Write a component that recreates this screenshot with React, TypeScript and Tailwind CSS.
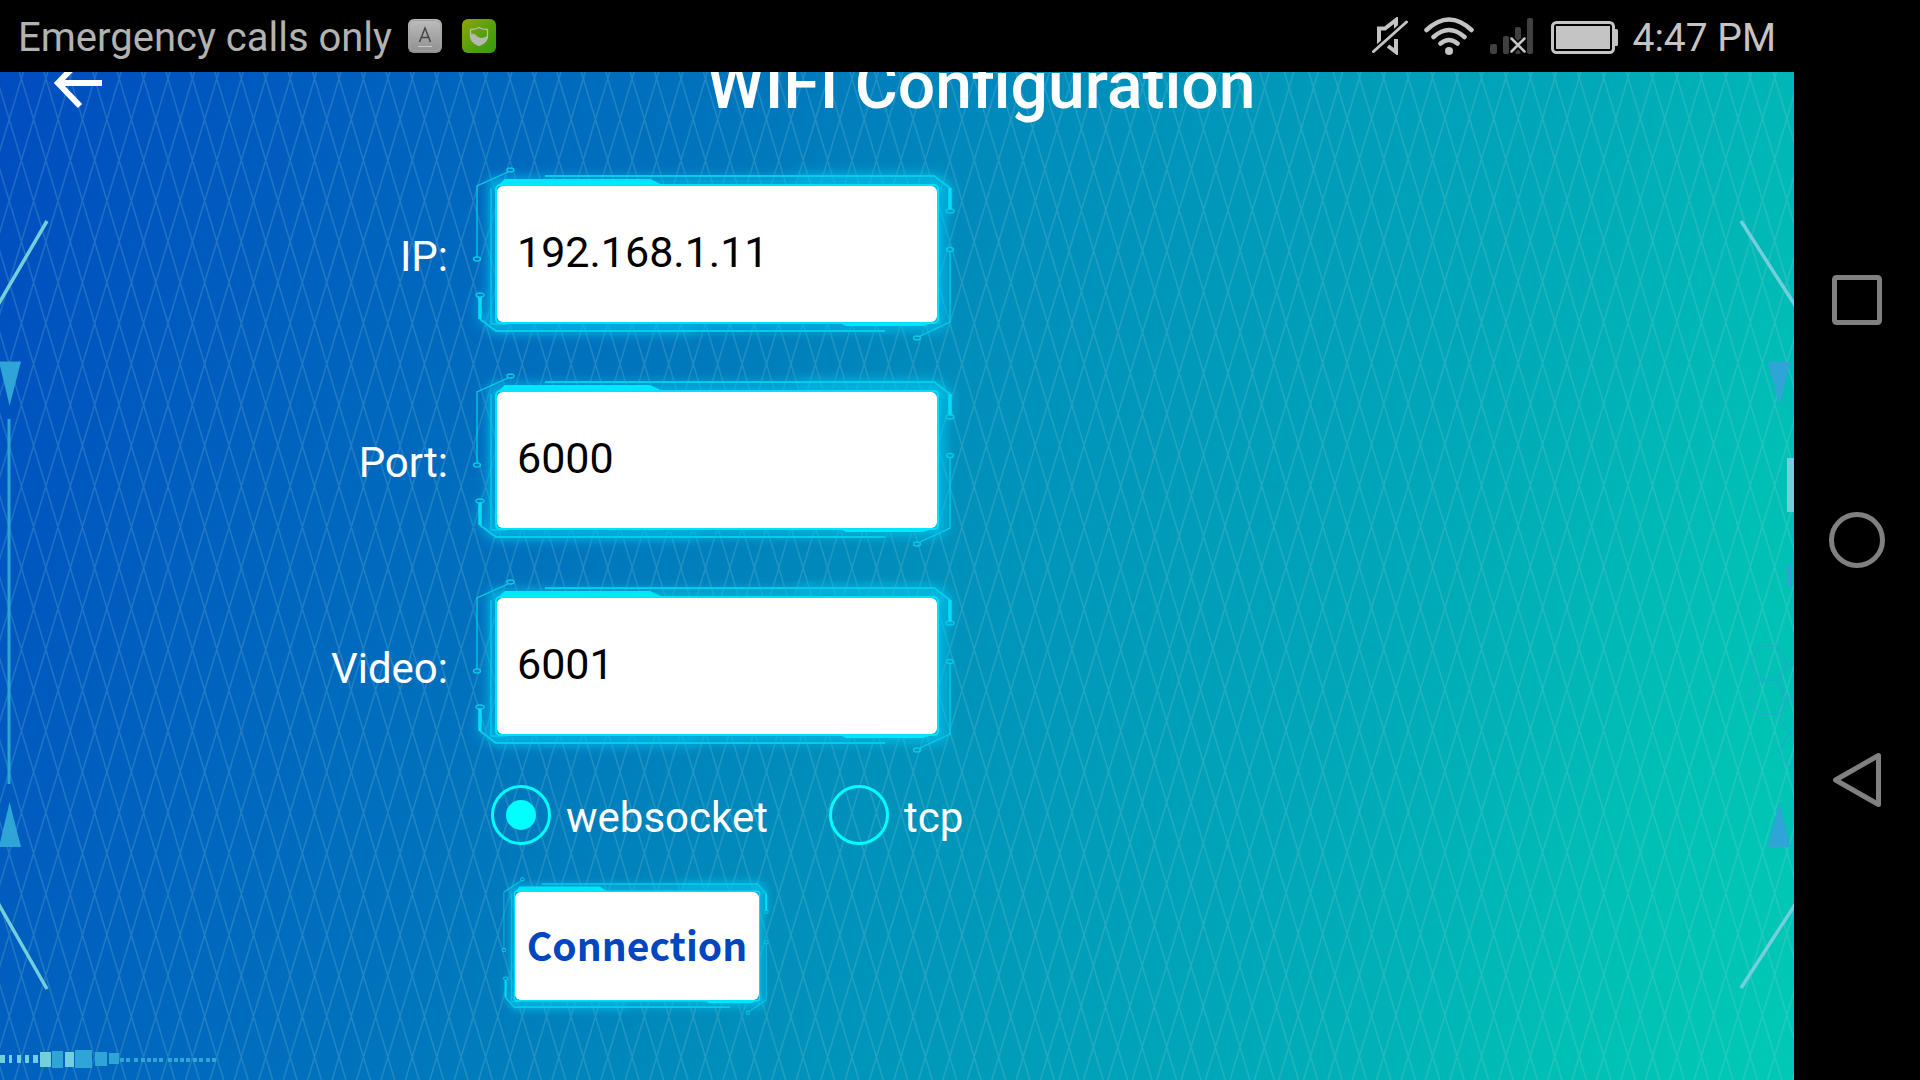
import React, { useState } from "react";

const LATTICE_STEP = 24.43;
const LATTICE_RUN = 302;

function latticePath() {
  const parts: string[] = [];
  for (let k = -14; k < 90; k++) {
    const down = -5 + k * LATTICE_STEP;
    const downX = down > 1004 ? down - 5.4 : down;
    parts.push(`M${downX.toFixed(1)} 72L${(downX + LATTICE_RUN).toFixed(1)} 1080`);
    const up = 23.4 + k * LATTICE_STEP;
    const upX = up > 1355 ? up - 6 : up;
    parts.push(`M${upX.toFixed(1)} 72L${(upX - LATTICE_RUN).toFixed(1)} 1080`);
  }
  return parts.join("");
}

const LIGHT_BLOCKS = [
  [0, 1055, 5, 8],
  [9, 1055, 3, 8],
  [17, 1055, 4, 8],
  [25, 1055, 4, 8],
  [33, 1055, 5, 8],
  [40, 1052, 11, 15],
  [65, 1052, 9, 15],
];
const DARK_BLOCKS = [
  [52, 1051, 11, 17],
  [75, 1050, 17, 18],
  [95, 1052, 12, 14],
  [109, 1053, 10, 11],
];
const DOTS = [120, 126, 134, 141, 147, 153, 159, 168, 174, 180, 186, 193, 199, 206, 212];

function Backdrop() {
  return (
    <svg
      className="absolute inset-0 h-full w-full"
      viewBox="0 72 1794 1008"
      preserveAspectRatio="none"
      aria-hidden="true"
    >
      <defs>
        <linearGradient id="sea" gradientUnits="userSpaceOnUse" x1="0" y1="72" x2="1880" y2="756">
          <stop offset="0" stopColor="#004cc0" />
          <stop offset="0.33" stopColor="#0072bd" />
          <stop offset="0.5" stopColor="#008dbb" />
          <stop offset="0.75" stopColor="#00a8b8" />
          <stop offset="0.9" stopColor="#00bfb5" />
          <stop offset="1" stopColor="#00c8b4" />
        </linearGradient>
      </defs>
      <rect x="0" y="72" width="1794" height="1008" fill="url(#sea)" />
      <path d={latticePath()} stroke="#a0d8e0" strokeOpacity="0.2" strokeWidth="1.6" fill="none" />

      <g stroke="#73cfdb" strokeWidth="3.5">
        <path d="M47 221L-2 305M-2 903L47 989" />
        <path d="M1741 221L1798 310M1741 988L1798 900" />
      </g>
      <g fill="#2fa4d6">
        <path d="M-1 361.500H21L9.600 406Z" />
        <path d="M-1 847H21L9.600 802Z" />
        <rect x="7.500" y="419" width="3" height="365" />
        <path d="M1767.500 361.500H1790.500L1779.600 405Z" />
        <path d="M1767.500 847H1790.500L1779.600 802Z" />
        <rect x="1788" y="564" width="3.500" height="23" />
        {DARK_BLOCKS.map(([x, y, w, h]) => (
          <rect key={x} x={x} y={y} width={w} height={h} />
        ))}
        {DOTS.map((x) => (
          <rect key={x} x={x} y="1058" width="4" height="4" />
        ))}
      </g>
      <g fill="#73cfdb">
        <rect x="1787" y="458" width="7" height="54" />
        {LIGHT_BLOCKS.map(([x, y, w, h]) => (
          <rect key={x} x={x} y={y} width={w} height={h} />
        ))}
      </g>
      <g transform="translate(1700 500) scale(0.3333)" fill="none" stroke="#2f9fd6" strokeOpacity="0.8" strokeWidth="3">
        <path d="M150 487L177 438H232L261 487L232 537H177Z" />
        <path d="M145 593L173 544H229L256 593L229 642H173Z" />
        <path d="M300 494H265L235 543L265 592H300" />
        <path d="M300 600H265L236 649L265 697H300" />
        <path d="M300 703H266L237 753L265 802H300" />
      </g>
    </svg>
  );
}

function CircuitFrame() {
  return (
    <svg
      className="pointer-events-none absolute inset-0 h-full w-full overflow-visible"
      viewBox="0 0 440 136"
      preserveAspectRatio="none"
      fill="none"
      aria-hidden="true"
    >
      <defs>
        <filter id="halo" x="-20%" y="-40%" width="140%" height="180%">
          <feGaussianBlur stdDeviation="6" />
        </filter>
      </defs>
      <g filter="url(#halo)" stroke="#00c8f0">
        <rect x="-3" y="-3" width="446" height="142" strokeWidth="9" strokeOpacity="0.9" />
        <path d="M-17 109V133L-1 145H200" strokeWidth="5" strokeOpacity="0.6" />
        <path d="M300 -10H437L453 2V25" strokeWidth="5" strokeOpacity="0.6" />
      </g>
      <g stroke="#00cdea" strokeWidth="1.300">
        <path d="M11 -14L-20 0V71" />
        <ellipse cx="13.500" cy="-16" rx="3.500" ry="2" />
        <ellipse cx="-20" cy="73" rx="3.500" ry="2" />
        <path d="M453 65V136L423 150" />
        <ellipse cx="453" cy="63.500" rx="3.500" ry="2" />
        <ellipse cx="420" cy="152" rx="3.500" ry="2" />
        <path d="M-17 133L-1 145H388" strokeWidth="2" />
        <path d="M48 -10H437L453 2" strokeWidth="2" />
        <ellipse cx="-17" cy="109" rx="4" ry="2" />
        <ellipse cx="453" cy="25" rx="4" ry="2" />
        <path d="M-6 2V138H10" />
      </g>
      <g stroke="#00e0f6">
        <path d="M-17 111V133M453 2V23" strokeWidth="3.500" />
        <rect x="-1" y="-1" width="442" height="138" rx="4" strokeWidth="2" />
      </g>
      <path d="M0 0L8 -7H153L166 -1ZM343 137L349 140H426L438 136Z" fill="#00e6fa" />
    </svg>
  );
}

function Field({
  id,
  label,
  value,
  onChange,
}: {
  id: string;
  label: string;
  value: string;
  onChange: (value: string) => void;
}) {
  return (
    <div className="flex items-center">
      <label htmlFor={id} className="w-[448px] pt-1.5 text-right text-[42px] leading-[48px] text-white">
        {label}
      </label>
      <div className="relative ml-[49px] h-[136px] w-[440px]">
        <CircuitFrame />
        <input
          id={id}
          type="text"
          value={value}
          onChange={(e) => onChange(e.target.value)}
          className="relative h-full w-full rounded-md bg-white px-5 pb-1 text-[43px] leading-[48px] text-black outline-none"
        />
      </div>
    </div>
  );
}

function Choice({ value, checked, onPick }: { value: string; checked: boolean; onPick: () => void }) {
  return (
    <label className="flex items-center text-[42px] leading-[48px] text-white">
      <span className="relative flex size-[60px] items-center justify-center">
        <input
          type="radio"
          name="protocol"
          value={value}
          checked={checked}
          onChange={onPick}
          className="peer absolute inset-0 size-[60px] appearance-none rounded-full border-[3px] border-[#00ffff]"
        />
        <span className="size-[30px] rounded-full bg-[#00ffff] opacity-0 peer-checked:opacity-100" />
      </span>
      <span className="ml-[15px] pt-1.5">{value}</span>
    </label>
  );
}

function StatusBar() {
  return (
    <div className="relative z-10 flex h-[72px] items-center justify-between bg-black pr-[18px] pl-[18px] text-[39px] leading-[44px] text-[#b2b2b2]">
      <div className="flex items-center">
        <span className="pt-1 text-[40px]">Emergency calls only</span>
        <svg className="ml-4 size-[34px]" viewBox="0 0 34 34" aria-hidden="true">
          <defs>
            <linearGradient id="key" x1="0" y1="0" x2="0" y2="1">
              <stop offset="0" stopColor="#bdbdbd" />
              <stop offset="1" stopColor="#8f8f8f" />
            </linearGradient>
          </defs>
          <rect width="34" height="34" rx="6" fill="url(#key)" />
          <rect x="1.500" y="1.500" width="31" height="30" rx="5" fill="none" stroke="#a2a2a2" />
          <path d="M11.500 23L17 9L22.500 23M13.500 18.500H20.500" fill="none" stroke="#444" strokeWidth="1.500" />
          <path d="M10 27.500H24" stroke="#c8c8c8" />
        </svg>
        <svg className="ml-5 size-[34px]" viewBox="0 0 34 34" aria-hidden="true">
          <defs>
            <linearGradient id="leaf" x1="0" y1="0" x2="1" y2="1">
              <stop offset="0" stopColor="#8fa50c" />
              <stop offset="0.6" stopColor="#4f9f0c" />
              <stop offset="1" stopColor="#389a12" />
            </linearGradient>
          </defs>
          <rect width="34" height="34" rx="6" fill="url(#leaf)" />
          <path
            d="M8.500 10.500Q14 10.500 17 8.500Q20 10.500 25.500 10.500V17Q25.500 23 17 26.500Q8.500 23 8.500 17Z"
            fill="none"
            stroke="#b9bfa9"
            strokeWidth="1.300"
          />
          <path d="M8.500 15C12 14 13.500 15.500 15.500 17.500S21 19.500 25.500 17C25.500 22.500 22 25 17 27C12 25 8.500 22 8.500 15Z" fill="#b5b8b0" />
        </svg>
      </div>
      <div className="flex items-center text-[#c4c4c4]">
        <svg className="h-[38px] w-9" viewBox="0 0 36 38" fill="none" stroke="currentColor" aria-hidden="true">
          <path d="M7 28V11.500H13L24 3V14" strokeWidth="4" />
          <path d="M16 29L24 35V22" strokeWidth="4" />
          <path d="M2 34L34 5" stroke="#000" strokeWidth="6" />
          <path d="M1.500 34.500L34.500 5" strokeWidth="3" strokeLinecap="round" />
        </svg>
        <svg className="ml-4 h-[38px] w-[50px]" viewBox="0 0 50 38" fill="none" stroke="currentColor" strokeLinecap="round" aria-hidden="true">
          <path d="M2.500 13Q25 -8 47.500 13M9.500 20Q25 6 40.500 20M16.500 26.500Q25 19.500 33.500 26.500" strokeWidth="4.500" />
          <circle cx="25" cy="34" r="4" fill="currentColor" stroke="none" />
        </svg>
        <svg className="ml-4 h-9 w-[43px]" viewBox="0 0 43 36" aria-hidden="true">
          <g fill="#404040">
            <rect x="0" y="26" width="7" height="10" rx="2" />
            <rect x="13" y="18" width="6" height="18" rx="2" />
            <rect x="25" y="9" width="6" height="27" rx="2" />
            <rect x="37" y="0" width="6" height="36" rx="2" />
          </g>
          <path d="M21 20.500L35 34M35 20.500L21 34" stroke="#000" strokeWidth="6" />
          <path d="M21.500 20.500L34.500 33.500M34.500 20.500L21.500 33.500" stroke="currentColor" strokeWidth="2.500" strokeLinecap="round" />
        </svg>
        <svg className="ml-[18px] h-[36px] w-[67px]" viewBox="0 0 67 36" fill="currentColor" aria-hidden="true">
          <rect x="1.500" y="4.500" width="61" height="30" rx="4" fill="none" stroke="currentColor" strokeWidth="3" />
          <rect x="5" y="8" width="54" height="23" />
          <rect x="62" y="11" width="5" height="17" rx="1.500" />
        </svg>
        <span className="ml-[14px] pt-[3px]">4:47 PM</span>
      </div>
    </div>
  );
}

function NavBar() {
  const button = "flex h-[240px] w-full items-center justify-center";
  return (
    <nav className="flex w-[126px] flex-col justify-center bg-black" aria-label="System navigation">
      <button type="button" className={button} aria-label="Recent apps">
        <svg className="size-[56px]" viewBox="0 0 56 56" fill="none" stroke="#808080" strokeWidth="5">
          <rect x="5.500" y="5.500" width="45" height="45" rx="2" />
        </svg>
      </button>
      <button type="button" className={button} aria-label="Home">
        <svg className="size-[56px]" viewBox="0 0 56 56" fill="none" stroke="#808080" strokeWidth="5">
          <circle cx="28" cy="28" r="25.500" />
        </svg>
      </button>
      <button type="button" className={button} aria-label="Back">
        <svg className="size-[56px]" viewBox="0 0 56 56" fill="none" stroke="#808080" strokeWidth="5" strokeLinejoin="round">
          <path d="M6.500 28L49.500 3.500V52.500Z" />
        </svg>
      </button>
    </nav>
  );
}

export default function App() {
  const [ip, setIp] = useState("192.168.1.11");
  const [port, setPort] = useState("6000");
  const [video, setVideo] = useState("6001");
  const [protocol, setProtocol] = useState("websocket");

  return (
    <div className="flex min-h-screen bg-black font-[Roboto,sans-serif]">
      <div className="flex flex-1 flex-col">
        <StatusBar />
        <main className="relative flex-1 overflow-hidden">
          <Backdrop />
          <header className="relative -mt-[26px] flex items-center">
            <button type="button" className="w-[168px] pl-[51px]" aria-label="Back">
              <svg className="size-[56px]" viewBox="0 0 56 56" fill="none" stroke="#fff" strokeWidth="6">
                <path d="M51 25H7M29 2L7 25L29 48" />
              </svg>
            </button>
            <h1 className="flex-1 text-center text-[66px] leading-[80px] font-medium text-white">WIFI Configuration</h1>
          </header>
          <form className="relative pt-[60px] pb-16" onSubmit={(e) => e.preventDefault()}>
            <div className="flex flex-col gap-[70px]">
              <Field id="ip" label="IP:" value={ip} onChange={setIp} />
              <Field id="port" label="Port:" value={port} onChange={setPort} />
              <Field id="video" label="Video:" value={video} onChange={setVideo} />
            </div>
            <div className="mt-[51px] ml-[491px] flex gap-[61px]">
              <Choice value="websocket" checked={protocol === "websocket"} onPick={() => setProtocol("websocket")} />
              <Choice value="tcp" checked={protocol === "tcp"} onPick={() => setProtocol("tcp")} />
            </div>
            <div className="relative mt-[47px] ml-[515px] h-[108px] w-[244px]">
              <CircuitFrame />
              <button
                type="submit"
                className="relative h-full w-full rounded-md bg-white pb-1 font-['Noto_Sans_CJK_SC',sans-serif] text-[39px] leading-[60px] font-bold text-[#0046bf]"
              >
                Connection
              </button>
            </div>
          </form>
        </main>
      </div>
      <NavBar />
    </div>
  );
}
